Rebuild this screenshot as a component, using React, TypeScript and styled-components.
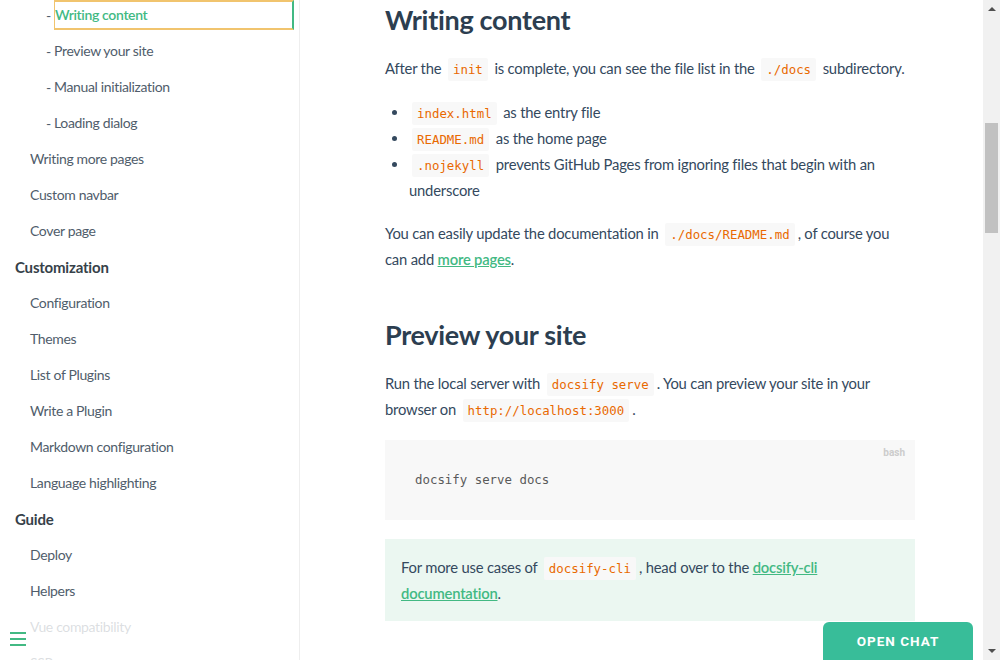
import React from "react";
import styled, { createGlobalStyle } from "styled-components";

const Global = createGlobalStyle`
  html, body { margin: 0; padding: 0; height: 660px; overflow: hidden; background: #fff; }
  * { box-sizing: border-box; }
  body { font-family: Lato, "Noto Sans", sans-serif; color: #34495e; -webkit-font-smoothing: antialiased; }
`;

const Page = styled.div`
  display: grid;
  grid-template-columns: 300px 1fr 17px;
  height: 660px;
  position: relative;
  overflow: hidden;
`;

const Sidebar = styled.aside`
  border-right: 1px solid #eee;
  height: 660px;
  overflow: hidden;
  position: relative;
`;

const NavList = styled.ul`
  list-style: none;
  margin: 0;
  padding: 0;
  display: flex;
  flex-direction: column;
  gap: 6px;
`;

const NavItem = styled.li<{ $level: number }>`
  display: flex;
  align-items: center;
  height: 30px;
  padding-left: ${(p) => (p.$level === 1 ? 15 : p.$level === 2 ? 30 : 46)}px;
  font-size: ${(p) => (p.$level === 1 ? 15 : 14)}px;
  letter-spacing: ${(p) => (p.$level === 1 ? "-0.2px" : "-0.35px")};
  font-weight: ${(p) => (p.$level === 1 ? 700 : 400)};
  color: ${(p) => (p.$level === 1 ? "#364149" : "#505d6b")};
  white-space: nowrap;
`;

const Dash = styled.span`
  width: 8px;
  flex: none;
`;

const NavLink = styled.span<{ $active?: boolean }>`
  display: block;
  flex: ${(p) => (p.$active ? "none" : "0 1 auto")};
  width: ${(p) => (p.$active ? "240px" : "auto")};
  height: 30px;
  line-height: ${(p) => (p.$active ? "26px" : "30px")};
  color: ${(p) => (p.$active ? "#42b983" : "inherit")};
  font-weight: ${(p) => (p.$active ? 600 : "inherit")};
  border: ${(p) => (p.$active ? "2px solid #f1c46e" : "none")};
  border-left-width: ${(p) => (p.$active ? "1px" : "0")};
  border-right: ${(p) => (p.$active ? "2px solid #42b983" : "none")};
`;

const ToggleBar = styled.div`
  position: absolute;
  left: 0;
  bottom: 0;
  width: 284px;
  height: 40px;
  background: rgba(255, 255, 255, 0.8);
  padding: 12px 10px;
  display: flex;
  flex-direction: column;
  gap: 4px;
`;

const ToggleLine = styled.span`
  display: block;
  width: 16px;
  height: 2px;
  background: #42b983;
`;

const Main = styled.main`
  height: 660px;
  overflow: hidden;
  padding-left: 85px;
`;

const Section = styled.article`
  width: 530px;
  font-size: 14.8px;
  letter-spacing: -0.2px;
  line-height: 26px;
`;

const H2 = styled.h2<{ $mt?: number }>`
  margin: ${(p) => p.$mt ?? 0}px 0 0;
  font-size: 27px;
  letter-spacing: -0.3px;
  line-height: 40px;
  font-weight: 700;
  color: #2c3e50;
`;

const P = styled.p<{ $mt?: number }>`
  margin: ${(p) => p.$mt ?? 0}px 0 0;
`;

const List = styled.ul<{ $mt?: number }>`
  margin: ${(p) => p.$mt ?? 0}px 0 0;
  padding-left: 24px;
  li::marker { color: #34495e; }
`;

const Code = styled.code`
  font-family: "DejaVu Sans Mono", "Liberation Mono", monospace;
  font-size: 12.4px;
  line-height: 1;
  letter-spacing: 0;
  color: #e96900;
  background: #f8f8f8;
  padding: 4px 5px;
  margin: 0 3px;
  border-radius: 2px;
  white-space: nowrap;
`;

const Link = styled.a`
  color: #42b983;
  font-weight: 600;
  text-decoration: underline;
`;

const Pre = styled.pre<{ $mt?: number }>`
  position: relative;
  margin: ${(p) => p.$mt ?? 0}px 0 0;
  height: 80px;
  background: #f8f8f8;
  padding: 0 30px;
  display: flex;
  align-items: center;
  font-family: "DejaVu Sans Mono", "Liberation Mono", monospace;
  font-size: 12.4px;
  letter-spacing: 0;
  color: #5a5a5a;
`;

const Lang = styled.span`
  position: absolute;
  top: 5px;
  right: 10px;
  font-family: Roboto, sans-serif;
  font-size: 10px;
  line-height: 15px;
  font-weight: 700;
  color: #ccc;
`;

const Tip = styled.div<{ $mt?: number }>`
  margin: ${(p) => p.$mt ?? 0}px 0 0;
  background: #ebf7f1;
  padding: 15px 16px;
`;

const Scrollbar = styled.div`
  background: #f1f1f1;
  display: flex;
  flex-direction: column;
  align-items: center;
  height: 660px;
  padding-top: 7px;
  position: relative;
`;

const ArrowUp = styled.span`
  width: 0;
  height: 0;
  border-left: 4px solid transparent;
  border-right: 4px solid transparent;
  border-bottom: 4px solid #505050;
`;

const ArrowDown = styled.span`
  width: 0;
  height: 0;
  border-left: 4px solid transparent;
  border-right: 4px solid transparent;
  border-top: 4px solid #505050;
  margin-top: auto;
  margin-bottom: 7px;
`;

const Thumb = styled.span`
  width: 13px;
  height: 110px;
  background: #c1c1c1;
  margin-top: 112px;
`;

const ChatButton = styled.button`
  position: absolute;
  left: 823px;
  top: 622px;
  width: 150px;
  height: 44px;
  border: none;
  border-radius: 6px 6px 0 0;
  background: #38bd99;
  color: #fff;
  font-family: Roboto, sans-serif;
  font-weight: 700;
  font-size: 13.5px;
  letter-spacing: 1px;
  padding: 0 0 6px;
  cursor: pointer;
`;

type Item = { label: string; level: number; active?: boolean };

const items: Item[] = [
  { label: "Writing content", level: 3, active: true },
  { label: "Preview your site", level: 3 },
  { label: "Manual initialization", level: 3 },
  { label: "Loading dialog", level: 3 },
  { label: "Writing more pages", level: 2 },
  { label: "Custom navbar", level: 2 },
  { label: "Cover page", level: 2 },
  { label: "Customization", level: 1 },
  { label: "Configuration", level: 2 },
  { label: "Themes", level: 2 },
  { label: "List of Plugins", level: 2 },
  { label: "Write a Plugin", level: 2 },
  { label: "Markdown configuration", level: 2 },
  { label: "Language highlighting", level: 2 },
  { label: "Guide", level: 1 },
  { label: "Deploy", level: 2 },
  { label: "Helpers", level: 2 },
  { label: "Vue compatibility", level: 2 },
  { label: "SSR", level: 2 },
];

export default function App() {
  return (
    <>
      <Global />
      <Page>
        <Sidebar>
          <NavList>
            {items.map((it) => (
              <NavItem key={it.label} $level={it.level}>
                {it.level === 3 && <Dash>-</Dash>}
                <NavLink $active={it.active}>{it.label}</NavLink>
              </NavItem>
            ))}
          </NavList>
          <ToggleBar>
            <ToggleLine />
            <ToggleLine />
            <ToggleLine />
          </ToggleBar>
        </Sidebar>
        <Main>
          <Section>
            <H2>Writing content</H2>
            <P $mt={15}>
              After the <Code>init</Code> is complete, you can see the file list in the <Code>./docs</Code> subdirectory.
            </P>
            <List $mt={18}>
              <li>
                <Code>index.html</Code> as the entry file
              </li>
              <li>
                <Code>README.md</Code> as the home page
              </li>
              <li>
                <Code>.nojekyll</Code> prevents GitHub Pages from ignoring files that begin with an
                <br />
                underscore
              </li>
            </List>
            <P $mt={17}>
              You can easily update the documentation in <Code>./docs/README.md</Code>, of course you
              <br />
              can add <Link>more pages</Link>.
            </P>
            <H2 $mt={43}>Preview your site</H2>
            <P $mt={15}>
              Run the local server with <Code>docsify serve</Code>. You can preview your site in your
              <br />
              browser on <Code>http://localhost:3000</Code>.
            </P>
            <Pre $mt={18}>
              docsify serve docs
              <Lang>bash</Lang>
            </Pre>
            <Tip $mt={19}>
              For more use cases of <Code>docsify-cli</Code>, head over to the <Link>docsify-cli</Link>
              <br />
              <Link>documentation</Link>.
            </Tip>
          </Section>
        </Main>
        <Scrollbar>
          <ArrowUp />
          <Thumb />
          <ArrowDown />
        </Scrollbar>
        <ChatButton>OPEN CHAT</ChatButton>
      </Page>
    </>
  );
}
